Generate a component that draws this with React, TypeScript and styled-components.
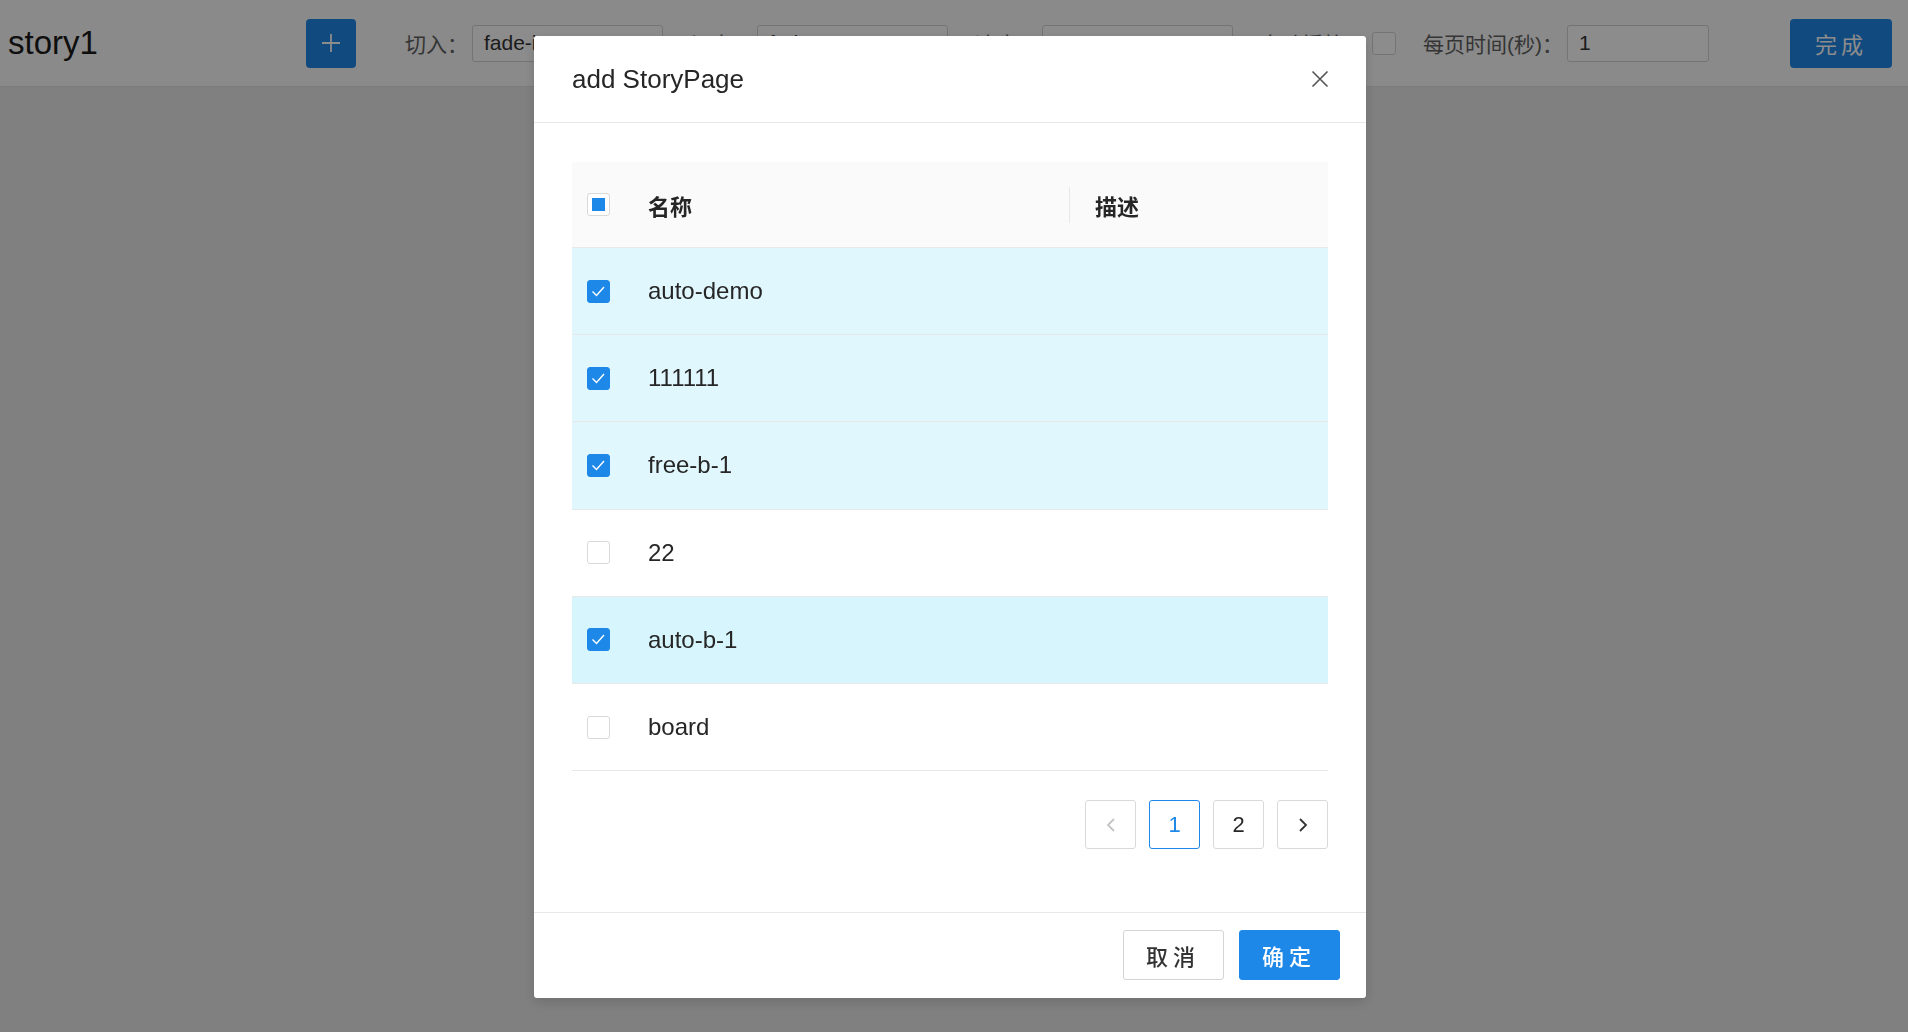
import React from "react";
import styled, { createGlobalStyle } from "styled-components";

const GlobalStyle = createGlobalStyle`
  html, body { margin: 0; padding: 0; }
  body {
    font-family: "Liberation Sans", "Noto Sans CJK SC", sans-serif;
    background: #e9e9e9;
    color: #262626;
  }
  * { box-sizing: border-box; }
`;

const Page = styled.div`
  min-height: 100vh;
  background: #e9e9e9;
`;

const Toolbar = styled.header`
  height: 87px;
  background: #fbfbfb;
  border-bottom: 1px solid #e0e0e0;
  display: flex;
  align-items: center;
  padding: 0 16px 0 8px;
`;

const Title = styled.h1`
  margin: 0;
  width: 298px;
  font-size: 33px;
  font-weight: 400;
  color: #1a1a1a;
`;

const IconButton = styled.button`
  width: 50px;
  height: 49px;
  border: none;
  border-radius: 4px;
  background: #1f87e8;
  display: flex;
  align-items: center;
  justify-content: center;
  margin-right: 49px;
  padding: 0;
`;

const Field = styled.div<{ $gap?: number }>`
  display: flex;
  align-items: center;
  gap: ${(p) => p.$gap ?? 4}px;
  margin-right: 27px;
`;

const Label = styled.span`
  font-size: 21px;
  color: #626262;
  white-space: nowrap;
`;

const TextInput = styled.div<{ $w: number }>`
  width: ${(p) => p.$w}px;
  height: 37px;
  border: 1px solid #d4d4d4;
  border-radius: 3px;
  background: #fff;
  padding-left: 11px;
  display: flex;
  align-items: center;
  font-size: 21px;
  color: #333;
  overflow: hidden;
  white-space: nowrap;
`;

const ToolCheck = styled.span`
  width: 24px;
  height: 23px;
  border: 1px solid #d4d4d4;
  border-radius: 3px;
  background: #fff;
  display: inline-block;
`;

const DoneButton = styled.button`
  margin-left: auto;
  width: 102px;
  height: 49px;
  border: none;
  border-radius: 4px;
  background: #1f87e8;
  color: #fff;
  font-family: inherit;
  font-size: 22px;
  letter-spacing: 4px;
`;

const Mask = styled.div`
  position: fixed;
  inset: 0;
  background: rgba(0, 0, 0, 0.45);
`;

const Modal = styled.div`
  position: fixed;
  top: 36px;
  left: 534px;
  width: 832px;
  background: #fff;
  border-radius: 3px;
  box-shadow: 0 4px 12px rgba(0, 0, 0, 0.15);
`;

const ModalHeader = styled.div`
  height: 87px;
  border-bottom: 1px solid #e8e8e8;
  display: flex;
  align-items: center;
  justify-content: space-between;
  padding: 0 36px 0 38px;
`;

const ModalTitle = styled.div`
  font-size: 26px;
  color: #262626;
`;

const CloseButton = styled.button`
  border: none;
  background: transparent;
  padding: 0;
  width: 20px;
  height: 20px;
  display: flex;
  align-items: center;
  justify-content: center;
`;

const ModalBody = styled.div`
  padding: 39px 38px 63px;
`;

const Table = styled.div`
  width: 100%;
`;

const Row = styled.div<{ $bg?: string; $head?: boolean }>`
  display: grid;
  grid-template-columns: 52px 445px 1fr;
  align-items: center;
  height: ${(p) => (p.$head ? 86 : 87.2)}px;
  background: ${(p) => p.$bg ?? "#fff"};
  border-bottom: 1px solid #e8e8e8;
`;

const CheckCell = styled.div`
  padding-left: 15px;
  display: flex;
  align-items: center;
`;

const Cell = styled.div<{ $head?: boolean; $divider?: boolean }>`
  position: relative;
  height: 100%;
  display: flex;
  align-items: center;
  padding-left: ${(p) => (p.$divider ? 26 : 24)}px;
  font-size: ${(p) => (p.$head ? 22 : 24)}px;
  font-weight: ${(p) => (p.$head ? 600 : 400)};
  color: #262626;
  &::before {
    content: "";
    display: ${(p) => (p.$divider ? "block" : "none")};
    position: absolute;
    left: 0;
    top: 50%;
    transform: translateY(-50%);
    width: 1px;
    height: 36px;
    background: #e8e8e8;
  }
`;

type CheckState = "checked" | "unchecked" | "indeterminate";

const Box = styled.span<{ $state: CheckState }>`
  width: 23px;
  height: 23px;
  border-radius: 3px;
  display: inline-flex;
  align-items: center;
  justify-content: center;
  background: ${(p) => (p.$state === "checked" ? "#1e88e8" : "#fff")};
  border: 1px solid ${(p) => (p.$state === "checked" ? "#1e88e8" : "#d9d9d9")};
`;

const Inner = styled.span`
  width: 13px;
  height: 13px;
  background: #1e88e8;
`;

const Checkbox = ({ state }: { state: CheckState }) => (
  <Box $state={state}>
    {state === "checked" && (
      <svg width="19" height="19" viewBox="0 0 19 19">
        <polyline points="3.5,9.5 7.5,13.5 15,5" fill="none" stroke="#fff" strokeWidth="1.4" />
      </svg>
    )}
    {state === "indeterminate" && <Inner />}
  </Box>
);

const Pagination = styled.div`
  display: flex;
  justify-content: flex-end;
  gap: 13px;
  margin-top: 29px;
`;

const PageButton = styled.button<{ $active?: boolean }>`
  width: 51px;
  height: 49px;
  border: 1px solid ${(p) => (p.$active ? "#1e88e8" : "#d9d9d9")};
  border-radius: 3px;
  background: #fff;
  color: ${(p) => (p.$active ? "#1e88e8" : "#262626")};
  font-family: inherit;
  font-size: 22px;
  display: flex;
  align-items: center;
  justify-content: center;
  padding: 0;
`;

const ModalFooter = styled.div`
  border-top: 1px solid #e8e8e8;
  padding: 17px 26px 18px;
  display: flex;
  justify-content: flex-end;
  gap: 15px;
`;

const FooterButton = styled.button<{ $primary?: boolean }>`
  width: 101px;
  height: 50px;
  border-radius: 3px;
  border: 1px solid ${(p) => (p.$primary ? "#1e88e8" : "#d4d4d4")};
  background: ${(p) => (p.$primary ? "#1e88e8" : "#fff")};
  color: ${(p) => (p.$primary ? "#fff" : "#333")};
  font-family: inherit;
  font-size: 22px;
  font-weight: 500;
  letter-spacing: 5px;
  padding-left: 5px;
`;

const rows: { name: string; checked: boolean; bg?: string }[] = [
  { name: "auto-demo", checked: true, bg: "#e1f7fe" },
  { name: "111111", checked: true, bg: "#e1f7fe" },
  { name: "free-b-1", checked: true, bg: "#e1f7fe" },
  { name: "22", checked: false },
  { name: "auto-b-1", checked: true, bg: "#d6f5fd" },
  { name: "board", checked: false },
];

const Chevron = ({ dir, color }: { dir: "left" | "right"; color: string }) => (
  <svg width="14" height="18" viewBox="0 0 14 18">
    <polyline
      points={dir === "left" ? "10,3 4,9 10,15" : "4,3 10,9 4,15"}
      fill="none"
      stroke={color}
      strokeWidth="1.8"
    />
  </svg>
);

export default function App() {
  return (
    <>
      <GlobalStyle />
      <Page>
        <Toolbar>
          <Title>story1</Title>
          <IconButton>
            <svg width="22" height="22" viewBox="0 0 22 22">
              <path d="M11 2v18M2 11h18" stroke="#fff" strokeWidth="1.8" />
            </svg>
          </IconButton>
          <Field>
            <Label>切入：</Label>
            <TextInput $w={191}>fade-in</TextInput>
          </Field>
          <Field>
            <Label>切出：</Label>
            <TextInput $w={191}>fade-out</TextInput>
          </Field>
          <Field>
            <Label>速度：</Label>
            <TextInput $w={191}>1000</TextInput>
          </Field>
          <Field $gap={7}>
            <Label>自动播放：</Label>
            <ToolCheck />
          </Field>
          <Field>
            <Label>每页时间(秒)：</Label>
            <TextInput $w={142}>1</TextInput>
          </Field>
          <DoneButton>完成</DoneButton>
        </Toolbar>
      </Page>
      <Mask />
      <Modal>
        <ModalHeader>
          <ModalTitle>add StoryPage</ModalTitle>
          <CloseButton>
            <svg width="20" height="20" viewBox="0 0 20 20">
              <path d="M2.5 2.5L17.5 17.5M17.5 2.5L2.5 17.5" stroke="#555" strokeWidth="1.6" />
            </svg>
          </CloseButton>
        </ModalHeader>
        <ModalBody>
          <Table>
            <Row $head $bg="#fafafa">
              <CheckCell>
                <Checkbox state="indeterminate" />
              </CheckCell>
              <Cell $head>名称</Cell>
              <Cell $head $divider>描述</Cell>
            </Row>
            {rows.map((r) => (
              <Row key={r.name} $bg={r.bg}>
                <CheckCell>
                  <Checkbox state={r.checked ? "checked" : "unchecked"} />
                </CheckCell>
                <Cell>{r.name}</Cell>
                <Cell />
              </Row>
            ))}
          </Table>
          <Pagination>
            <PageButton>
              <Chevron dir="left" color="#c4c4c4" />
            </PageButton>
            <PageButton $active>1</PageButton>
            <PageButton>2</PageButton>
            <PageButton>
              <Chevron dir="right" color="#333" />
            </PageButton>
          </Pagination>
        </ModalBody>
        <ModalFooter>
          <FooterButton>取消</FooterButton>
          <FooterButton $primary>确定</FooterButton>
        </ModalFooter>
      </Modal>
    </>
  );
}
